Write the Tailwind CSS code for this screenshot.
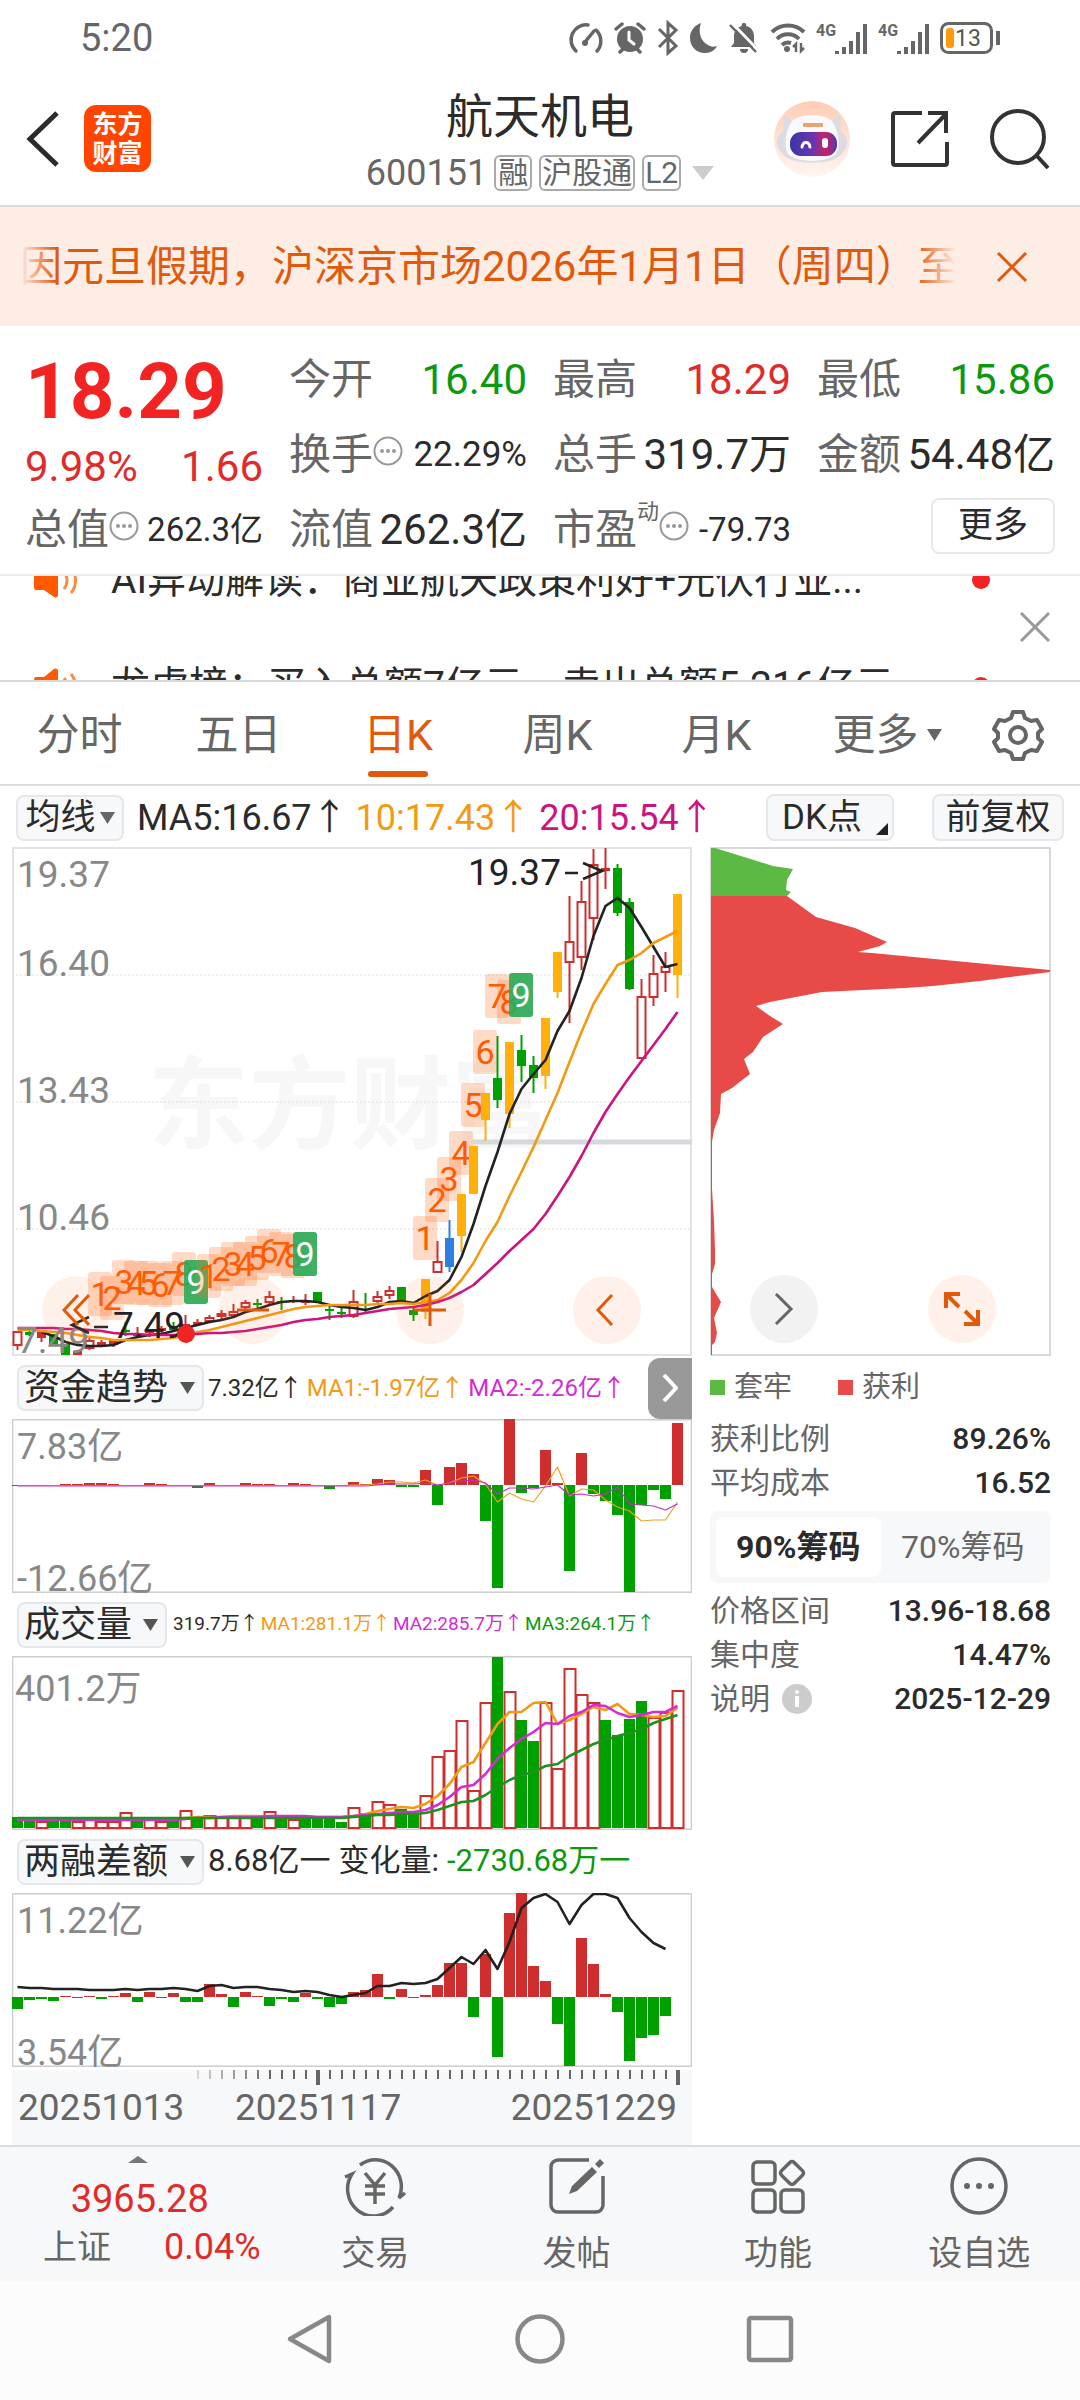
<!DOCTYPE html>
<html lang="zh-CN">
<head>
<meta charset="utf-8">
<meta name="viewport" content="width=device-width, initial-scale=1">
<title>航天机电 600151</title>
<script src="https://cdn.jsdelivr.net/npm/@tailwindcss/browser@4"></script>
</head>
<body class="min-h-screen flex flex-col bg-white text-[#2b2b2b] font-['Roboto','Noto_Sans_CJK_SC',sans-serif] overflow-x-hidden">

<!-- status bar -->
<div class="h-18 flex items-center justify-between pl-20 pr-20 pt-1 text-[#666]">
  <span class="text-[38px] leading-10">5:20</span>
  <div class="flex items-center gap-[10px]">
    <svg class="w-9 h-8" viewBox="0 0 36 32" fill="none" stroke="#666" stroke-width="3.5" stroke-linecap="round"><path d="M8 29A15 15 0 0 1 20 3M28 8A15 15 0 0 1 29 29M17 20 26 9"/><circle cx="17" cy="21" r="3" fill="#666" stroke="none"/></svg>
    <svg class="w-8 h-8" viewBox="0 0 32 32" fill="none" stroke="#666" stroke-width="3.5" stroke-linecap="round"><circle cx="16" cy="17" r="13" fill="#666" stroke="none"/><path d="M2 7 8 2M30 7 24 2M6 30l3-3M26 30l-3-3"/><path d="M15 10v8l5 4" stroke="#fff" stroke-width="3"/></svg>
    <svg class="w-6 h-9" viewBox="0 0 24 36" fill="none" stroke="#666" stroke-width="3"><path d="M3 9 20 26 12 33V3l8 7L3 27"/></svg>
    <svg class="w-7 h-8" viewBox="0 0 28 32"><path d="M11 1C3 4 0 10 0 16c0 9 7 15 15 15 6 0 10-3 12-7-3 1-6 1-9-1C10 19 8 9 11 1Z" fill="#666"/></svg>
    <svg class="w-8 h-8" viewBox="0 0 32 32"><path d="M16 1a2 2 0 0 1 2 3c5 1 8 5 8 10v7l3 4H3l3-4v-7c0-5 3-9 8-10a2 2 0 0 1 2-3ZM12 27h8a4 4 0 0 1-8 0Z" fill="#666"/><path d="M5 2 31 29" stroke="#fff" stroke-width="3"/><path d="M2 3 28 30" stroke="#666" stroke-width="2.5"/></svg>
    <svg class="w-9 h-8" viewBox="0 0 36 32" fill="none" stroke="#666" stroke-width="4"><path d="M2 10a23 23 0 0 1 32 0M7 17a15 15 0 0 1 22 0M12 23a9 9 0 0 1 9-2"/><circle cx="17" cy="27" r="3" fill="#666" stroke="none"/><path d="M26 30v-8l-3 3M31 21v8l3-3" stroke-width="2.5"/></svg>
    <svg class="w-13 h-9" viewBox="0 0 52 36"><text x="0" y="16" font-size="16" font-weight="700" fill="#666">4G</text><path d="M21 31v3M28 27v7M35 21v13M42 12v22M49 4v30" stroke="#666" stroke-width="4"/></svg>
    <svg class="w-13 h-9" viewBox="0 0 52 36"><text x="0" y="16" font-size="16" font-weight="700" fill="#666">4G</text><path d="M21 31v3M28 27v7M35 21v13M42 12v22M49 4v30" stroke="#666" stroke-width="4"/></svg>
    <svg class="w-15 h-8" viewBox="0 0 60 32"><rect x="1.5" y="1.500" width="50" height="29" rx="7" fill="none" stroke="#666" stroke-width="3"/><rect x="6" y="6" width="8" height="20" rx="3" fill="#ff9a0a"/><path d="M58 9v14" stroke="#666" stroke-width="4"/><text x="15" y="24" font-size="23" fill="#555">13</text></svg>
  </div>
</div>

<!-- title bar -->
<header class="h-[135px] grid grid-cols-[1fr_auto_1fr] items-center border-b-2 border-[#dcdcdc]">
  <div class="flex items-center gap-6 pl-6">
    <button aria-label="返回"><svg class="w-9 h-14" viewBox="0 0 36 56" fill="none" stroke="#2b2b2b" stroke-width="5"><path d="M33 2 6 28l27 26"/></svg></button>
    <div class="w-[67px] h-[67px] rounded-xl bg-[#ff4500] text-white font-bold text-[25px] leading-[29px] flex flex-col items-center justify-center"><span>东方</span><span>财富</span></div>
  </div>
  <div class="flex flex-col items-center gap-2">
    <h1 class="text-[47px] leading-[60px]">航天机电</h1>
    <div class="flex items-center gap-[7px] text-[#666]">
      <span class="text-[36px] leading-9">600151</span>
      <span class="h-9 px-[2px] border-2 border-[#aaa] rounded-md text-[30px] leading-8">融</span>
      <span class="h-9 px-[1px] border-2 border-[#aaa] rounded-md text-[30px] leading-8">沪股通</span>
      <span class="h-9 px-[1px] border-2 border-[#aaa] rounded-md text-[30px] leading-8">L2</span>
      <svg class="w-[22px] h-[14px] ml-1" viewBox="0 0 22 14"><path d="M0 0h22L11 14Z" fill="#ccc"/></svg>
    </div>
  </div>
  <div class="flex items-center justify-end gap-[41px] pr-[30px]">
    <button aria-label="助手"><svg class="w-[76px] h-[76px]" viewBox="0 0 76 76">
      <defs><linearGradient id="halo" x1="0" y1="0" x2="0" y2="1"><stop offset="0" stop-color="#ffcdb5"/><stop offset="1" stop-color="#fff6f1"/></linearGradient>
      <linearGradient id="visor" x1="0" y1="0" x2="1" y2="0"><stop offset="0" stop-color="#3b35a8"/><stop offset=".5" stop-color="#6a35b0"/><stop offset=".75" stop-color="#d01e62"/><stop offset="1" stop-color="#4a3bb5"/></linearGradient></defs>
      <circle cx="38" cy="38" r="38" fill="url(#halo)"/>
      <path d="M10 17c2-3 6-2 8 3 10-8 30-8 40 0 2-5 6-6 8-3l1 14c8 5 8 15 1 21-6 13-54 13-60 0-7-6-7-16 1-21Z" fill="#dcdbe2"/>
      <path d="M18 20c10-8 30-8 40 0 6 9 9 24 4 33-8 9-40 9-48 0-5-9-2-24 4-33Z" fill="#fafafc"/>
      <rect x="29" y="22" width="20" height="4" rx="1" fill="#e8a36f"/>
      <rect x="16" y="31" width="47" height="24" rx="11" fill="url(#visor)"/>
      <path d="M28 46c1-6 7-6 8 0" stroke="#fff" stroke-width="3" fill="none" stroke-linecap="round"/><rect x="48" y="37" width="6" height="10" rx="3" fill="#fff"/>
    </svg></button>
    <button aria-label="分享"><svg class="w-[58px] h-[58px]" viewBox="0 0 58 58" fill="none" stroke="#333" stroke-width="4"><path d="M31 3H4a2 2 0 0 0-2 2v48a2 2 0 0 0 2 2h50a2 2 0 0 0 2-2V32M37 3h18v20M55 4 27 33"/></svg></button>
    <button aria-label="搜索"><svg class="w-[60px] h-[60px]" viewBox="0 0 60 60" fill="none" stroke="#333" stroke-width="4"><circle cx="28" cy="28" r="26"/><path d="m47 47 11 12"/></svg></button>
  </div>
</header>

<!-- notice -->
<section class="h-[119px] bg-[#fdede4] flex items-center justify-between pl-5 pr-[52px] text-[#e15a0b]">
  <div class="relative flex-1 overflow-hidden whitespace-nowrap text-[42px] leading-[60px] mr-[40px]">因元旦假期，沪深京市场2026年1月1日（周四）至1月3日休市
    <div class="absolute inset-y-0 left-0 w-9 bg-linear-to-r from-[#fdede4] to-[#fdede4]/0"></div>
    <div class="absolute inset-y-0 right-0 w-10 bg-linear-to-l from-[#fdede4] to-[#fdede4]/0"></div>
  </div>
  <button aria-label="关闭公告"><svg class="w-8 h-8" viewBox="0 0 32 32" stroke="#e15a0b" stroke-width="3"><path d="m2 2 28 28M30 2 2 30"/></svg></button>
</section>

<!-- quote -->
<section class="h-[250px] grid grid-cols-4 grid-rows-[75px_75px_75px] gap-x-[26px] px-[25px] pt-4 text-[42px] leading-[60px] whitespace-nowrap border-b-2 border-[#ececec]">
  <div class="row-span-2 flex flex-col text-[#e02b2b]">
    <div class="h-[100px] flex items-center text-[78px] font-bold text-[#f22323]">18.29</div>
    <div class="flex justify-between leading-[50px]"><span>9.98%</span><span>1.66</span></div>
  </div>
  <div class="flex items-center justify-between"><span class="text-[#666]">今开</span><span class="text-[#0d990d]">16.40</span></div>
  <div class="flex items-center justify-between"><span class="text-[#666]">最高</span><span class="text-[#e02b2b]">18.29</span></div>
  <div class="flex items-center justify-between"><span class="text-[#666]">最低</span><span class="text-[#0d990d]">15.86</span></div>
  <div class="flex items-center justify-between"><span class="flex items-center text-[#666]">换手<svg class="w-[30px] h-[30px] -mt-2" viewBox="0 0 30 30"><circle cx="15" cy="15" r="13.500" fill="none" stroke="#999" stroke-width="2"/><g fill="#999"><circle cx="9" cy="15" r="2"/><circle cx="15" cy="15" r="2"/><circle cx="21" cy="15" r="2"/></g></svg></span><span class="text-[35px]">22.29%</span></div>
  <div class="flex items-center justify-between"><span class="text-[#666]">总手</span><span>319.7万</span></div>
  <div class="flex items-center justify-between"><span class="text-[#666]">金额</span><span>54.48亿</span></div>
  <div class="flex items-center justify-between"><span class="flex items-center text-[#666]">总值<svg class="w-[30px] h-[30px] -mt-2" viewBox="0 0 30 30"><circle cx="15" cy="15" r="13.500" fill="none" stroke="#999" stroke-width="2"/><g fill="#999"><circle cx="9" cy="15" r="2"/><circle cx="15" cy="15" r="2"/><circle cx="21" cy="15" r="2"/></g></svg></span><span class="text-[33px]">262.3亿</span></div>
  <div class="flex items-center justify-between"><span class="text-[#666]">流值</span><span>262.3亿</span></div>
  <div class="flex items-center justify-between"><span class="flex items-center text-[#666]">市盈<span class="text-[22px] leading-6 self-start">动</span><svg class="w-[30px] h-[30px] -mt-2" viewBox="0 0 30 30"><circle cx="15" cy="15" r="13.500" fill="none" stroke="#999" stroke-width="2"/><g fill="#999"><circle cx="9" cy="15" r="2"/><circle cx="15" cy="15" r="2"/><circle cx="21" cy="15" r="2"/></g></svg></span><span class="text-[33px]">-79.73</span></div>
  <div class="flex items-center justify-end"><button class="w-[124px] h-[56px] border-2 border-[#e8e8e8] rounded-lg text-[35px] leading-[52px] -mt-2">更多</button></div>
</section>

<!-- news ticker -->
<section class="relative h-[106px] overflow-hidden border-b-2 border-[#d8d8d8] text-[39px] leading-[60px]">
  <ul class="-mt-[49px]">
    <li class="h-[106px] flex items-center pl-[34px] pr-[90px]">
      <svg class="w-11 h-9 mr-[33px]" viewBox="0 0 44 36"><path d="M2 9h8L20 1c2-1 4 0 4 2v30c0 2-2 3-4 2L10 28H2c-1 0-2-1-2-3V12c0-2 1-3 2-3Z" fill="#ff5a00"/><path d="M30 10c4 5 4 12 0 17M37 6c6 7 6 18 0 25" fill="none" stroke="#ff8a40" stroke-width="3"/></svg>
      <a href="#" class="flex-1 whitespace-nowrap">AI异动解读：商业航天政策利好+光伏行业...</a><i class="w-[18px] h-[18px] rounded-full bg-[#f22323]"></i></li>
    <li class="h-[106px] flex items-center pl-[34px] pr-[90px]">
      <svg class="w-11 h-9 mr-[33px]" viewBox="0 0 44 36"><path d="M2 9h8L20 1c2-1 4 0 4 2v30c0 2-2 3-4 2L10 28H2c-1 0-2-1-2-3V12c0-2 1-3 2-3Z" fill="#ff5a00"/><path d="M30 10c4 5 4 12 0 17M37 6c6 7 6 18 0 25" fill="none" stroke="#ff8a40" stroke-width="3"/></svg>
      <a href="#" class="flex-1 whitespace-nowrap">龙虎榜：买入总额7亿元，卖出总额5.216亿元</a><i class="w-[18px] h-[18px] rounded-full bg-[#f22323]"></i></li>
  </ul>
  <button aria-label="关闭资讯" class="absolute right-[30px] top-[36px]"><svg class="w-[30px] h-[30px]" viewBox="0 0 30 30" stroke="#999" stroke-width="3"><path d="m1 1 28 28M29 1 1 29"/></svg></button>
</section>

<!-- period tabs -->
<nav class="h-[104px] pt-1 grid grid-cols-[159fr_159fr_160fr_159fr_159fr_182fr_102fr] items-center border-b-2 border-[#dcdcdc] text-[43px] leading-[60px] text-[#666]">
  <button>分时</button><button>五日</button>
  <button class="relative text-[#e15a0b]">日K<span class="absolute left-1/2 -translate-x-1/2 -bottom-3 w-[60px] h-[6px] rounded-full bg-[#e15a0b]"></span></button>
  <button>周K</button><button>月K</button>
  <button class="flex items-center justify-center gap-2">更多<svg class="w-[15px] h-3" viewBox="0 0 15 12"><path d="M0 0h15L7.500 12Z" fill="#666"/></svg></button>
  <button aria-label="设置" class="pl-[14px]"><svg class="w-[52px] h-[52px]" viewBox="0 0 52 52" fill="none" stroke="#666" stroke-width="4" stroke-linejoin="round"><path d="M21 3h10l2 6 6 3 6-1 5 9-4 4v5l4 4-5 9-6-1-6 3-2 6H21l-2-6-6-3-6 1-5-9 4-4v-5l-4-4 5-9 6 1 6-3Z"/><circle cx="26" cy="26" r="8"/></svg></button>
</nav>

<!-- moving averages -->
<div class="h-[61px] flex items-center pl-4 pr-4 pt-[2px] text-[36px] leading-[44px] whitespace-nowrap">
  <button class="h-[46px] w-[108px] shrink-0 flex items-center justify-center gap-1 bg-[#f7f8fa] border-2 border-[#e5e7eb] rounded-lg text-[35px] leading-[42px]">均线<svg class="w-[15px] h-3" viewBox="0 0 15 12"><path d="M0 0h15L7.500 12Z" fill="#666"/></svg></button>
  <div class="flex gap-2 ml-[13px]"><span>MA5:16.67↑</span><span class="text-[#f39a12]">10:17.43↑</span><span class="text-[#cc1480]">20:15.54↑</span></div>
  <div class="flex gap-[38px] ml-auto text-[35px] leading-[42px]">
    <button class="relative h-[47px] w-[128px] pr-4 bg-[#f7f8fa] border-2 border-[#e5e7eb] rounded-lg">DK点<svg class="absolute right-1 bottom-1 w-3 h-3" viewBox="0 0 12 12"><path d="M12 0v12H0Z" fill="#222"/></svg></button>
    <button class="h-[47px] w-[132px] bg-[#f7f8fa] border-2 border-[#e5e7eb] rounded-lg">前复权</button>
  </div>
</div>

<main class="grid grid-cols-[minmax(0,692fr)_minmax(0,388fr)] items-start">
  <div class="pl-3 whitespace-nowrap">
    <div class="relative">
      <svg id="kline" class="block w-full h-auto" viewBox="12 848 680 510"></svg>
      <div class="absolute inset-x-0 bottom-[13px] flex justify-between pl-[30px] pr-[51px]">
        <button aria-label="最左" class="w-[68px] h-[68px] rounded-full bg-[#ff6a20]/10 flex items-center justify-center"><svg class="w-7 h-8" viewBox="0 0 28 32" fill="none" stroke="#e15a0b" stroke-width="3"><path d="M16 1 2 16l14 15M27 1 13 16l14 15"/></svg></button>
        <button aria-label="缩小" class="w-[68px] h-[68px] rounded-full bg-[#ff6a20]/10 flex items-center justify-center"><svg class="w-8 h-8" viewBox="0 0 32 32" stroke="#e15a0b" stroke-width="3"><path d="M0 16h32"/></svg></button>
        <button aria-label="放大" class="w-[68px] h-[68px] rounded-full bg-[#ff6a20]/10 flex items-center justify-center"><svg class="w-8 h-8" viewBox="0 0 32 32" stroke="#e15a0b" stroke-width="3"><path d="M0 16h32M16 0v32"/></svg></button>
        <button aria-label="左移" class="w-[68px] h-[68px] rounded-full bg-[#ff6a20]/10 flex items-center justify-center"><svg class="w-7 h-8" viewBox="0 0 28 32" fill="none" stroke="#e15a0b" stroke-width="3"><path d="M19 1 5 16l14 15"/></svg></button>
      </div>
    </div>

    <div class="h-[62px] flex items-center pl-[5px]">
      <button class="h-[46px] w-[187px] shrink-0 flex items-center justify-between pl-[5px] pr-[7px] bg-[#f7f8fa] border-2 border-[#e5e7eb] rounded-lg text-[36px] leading-[42px]">资金趋势<svg class="w-[15px] h-3" viewBox="0 0 15 12"><path d="M0 0h15L7.500 12Z" fill="#555"/></svg></button>
      <div class="flex gap-1 ml-1 text-[24px]"><span>7.32亿↑</span><span class="text-[#f39a12]">MA1:-1.97亿↑</span><span class="text-[#d42bd4]">MA2:-2.26亿↑</span></div>
      <button aria-label="下一指标" class="ml-auto w-[44px] h-[61px] shrink-0 rounded-l-xl bg-[#999] flex items-center justify-center"><svg class="w-4 h-7" viewBox="0 0 16 28" fill="none" stroke="#fff" stroke-width="4"><path d="m2 1 12 13L2 27"/></svg></button>
    </div>
    <svg id="flow" class="block w-full h-auto" viewBox="12 1420 680 174"></svg>

    <div class="h-[63px] flex items-center pl-[5px]">
      <button class="h-[46px] w-[150px] shrink-0 flex items-center justify-between pl-[5px] pr-[7px] bg-[#f7f8fa] border-2 border-[#e5e7eb] rounded-lg text-[36px] leading-[42px]">成交量<svg class="w-[15px] h-3" viewBox="0 0 15 12"><path d="M0 0h15L7.500 12Z" fill="#555"/></svg></button>
      <div class="flex gap-[2px] ml-[6px] text-[19px]"><span>319.7万↑</span><span class="text-[#f39a12]">MA1:281.1万↑</span><span class="text-[#d42bd4]">MA2:285.7万↑</span><span class="text-[#0d990d]">MA3:264.1万↑</span></div>
    </div>
    <svg id="volume" class="block w-full h-auto" viewBox="12 1657 680 174"></svg>

    <div class="h-[63px] flex items-center pl-[5px]">
      <button class="h-[46px] w-[187px] shrink-0 flex items-center justify-between pl-[5px] pr-[7px] bg-[#f7f8fa] border-2 border-[#e5e7eb] rounded-lg text-[36px] leading-[42px]">两融差额<svg class="w-[15px] h-3" viewBox="0 0 15 12"><path d="M0 0h15L7.500 12Z" fill="#555"/></svg></button>
      <div class="flex gap-2 ml-1 text-[31px]"><span>8.68亿一</span><span>变化量:</span><span class="text-[#0d990d]">-2730.68万一</span></div>
    </div>
    <svg id="margin" class="block w-full h-auto" viewBox="12 1894 680 174"></svg>
    <svg id="axis" class="block w-full h-auto" viewBox="12 2068 680 78"></svg>
  </div>

  <aside class="pl-[18px] pr-[29px] text-[30px] leading-[44px] text-[#666]">
    <div class="relative">
      <svg class="block w-full h-auto" viewBox="710 848 341 510">
        <rect x="711" y="849" width="339" height="507" fill="none" stroke="#ccc" stroke-width="1.500"/>
        <path d="M711 849H715L757 862 773 867 793 870 787 881 786 891 791 893 787 897H711Z" fill="#5cb944"/>
        <path d="M711 897H787L816 918 855 929 887 943 880 947 858 953 872 954 1050 971V973L980 982 933 987 905 989 822 993 770 1003 756 1007 770 1017 783 1025 763 1038 753 1053 744 1060 750 1075 732 1089 721 1095 720 1114 714 1131 712 1143V1190L714 1222 715 1250V1265L712 1275V1288L721 1303 714 1319 717 1334 715 1343 712 1346V1356H711Z" fill="#e84a48"/>
      </svg>
      <div class="absolute inset-x-0 bottom-[14px] flex justify-between pl-10 pr-[55px]">
        <button aria-label="收起" class="w-[68px] h-[68px] rounded-full bg-[#f2f2f2] flex items-center justify-center"><svg class="w-5 h-8" viewBox="0 0 20 32" fill="none" stroke="#666" stroke-width="3"><path d="m2 1 15 15L2 31"/></svg></button>
        <button aria-label="全屏" class="w-[68px] h-[68px] rounded-full bg-[#fff1e9] flex items-center justify-center"><svg class="w-9 h-9" viewBox="0 0 36 36" fill="none" stroke="#e15a0b" stroke-width="4"><path d="M2 17V3h14M3 4l12 12M34 19v14H20M33 32 21 20"/></svg></button>
      </div>
    </div>
    <div class="h-[60px] flex items-center text-[29px]">
      <i class="w-[15px] h-[15px] bg-[#5cb944] mr-[9px]"></i>套牢<i class="w-[15px] h-[15px] bg-[#e84a48] ml-[46px] mr-[9px]"></i>获利
    </div>
    <dl>
      <div class="flex justify-between"><dt>获利比例</dt><dd class="font-medium text-[#2b2b2b]">89.26%</dd></div>
      <div class="flex justify-between"><dt>平均成本</dt><dd class="font-medium text-[#2b2b2b]">16.52</dd></div>
    </dl>
    <div class="h-[72px] my-[6px] grid grid-cols-2 p-[6px] bg-[#f7f8fa] rounded-lg text-[32px] leading-[60px]">
      <button class="bg-white rounded-lg font-bold text-[#2b2b2b]">90%筹码</button><button>70%筹码</button>
    </div>
    <dl>
      <div class="flex justify-between"><dt>价格区间</dt><dd class="font-medium text-[#2b2b2b]">13.96-18.68</dd></div>
      <div class="flex justify-between"><dt>集中度</dt><dd class="font-medium text-[#2b2b2b]">14.47%</dd></div>
      <div class="flex justify-between"><dt class="flex items-center gap-3">说明<svg class="w-[30px] h-[30px]" viewBox="0 0 30 30"><circle cx="15" cy="15" r="15" fill="#ccc"/><circle cx="15" cy="8" r="2" fill="#fff"/><path d="M15 12v11" stroke="#fff" stroke-width="4"/></svg></dt><dd class="font-medium text-[#2b2b2b]">2025-12-29</dd></div>
    </dl>
  </aside>
</main>

<!-- bottom bar -->
<footer class="h-[136px] grid grid-cols-[274fr_201fr_201fr_201fr_201fr] bg-[#f7f8fa] border-t-2 border-[#dadcde] text-[34px] leading-10 text-[#666]">
  <a href="#" class="relative flex flex-col items-center pt-[30px] pl-[5px] text-[#e02b2b]">
    <svg class="absolute left-[128px] top-[9px] w-5 h-[7px]" viewBox="0 0 20 7"><path d="M0 7 10 0l10 7Z" fill="#777"/></svg>
    <span class="text-[38px] leading-[44px]">3965.28</span>
    <span class="flex gap-[53px] pl-6 leading-[52px]"><span class="text-[#666]">上证</span><span class="text-[36px]">0.04%</span></span>
  </a>
  <button class="flex flex-col items-center pt-[9px] gap-[17px]"><svg class="w-16 h-[60px]" viewBox="0 0 64 60" fill="none" stroke="#666" stroke-width="3.500"><path d="M17 9A26 27 0 0 1 56 42l6-5M50 51A26 27 0 0 1 9 18L2 21M22 17l10 12 10-12M32 29v19M22 30h20M22 38h20"/></svg>交易</button>
  <button class="flex flex-col items-center pt-[9px] gap-[17px]"><svg class="w-[60px] h-[60px]" viewBox="0 0 60 60" fill="none" stroke="#666" stroke-width="3.500"><path d="M42 4H11a7 7 0 0 0-7 7v38a7 7 0 0 0 7 7h38a7 7 0 0 0 7-7V20"/><path d="m22 38 3-8 20-19 5 5-20 19ZM48 8l5-5 4 4-5 5Z" fill="#666" stroke="none"/></svg>发帖</button>
  <button class="flex flex-col items-center pt-[9px] gap-[17px]"><svg class="w-[60px] h-[60px]" viewBox="0 0 60 60" fill="none" stroke="#666" stroke-width="3.500"><rect x="5" y="6" width="22" height="22" rx="4"/><rect x="5" y="34" width="22" height="22" rx="4"/><rect x="33" y="34" width="22" height="22" rx="4"/><rect x="35" y="8" width="18" height="18" rx="3" transform="rotate(45 44 17)"/></svg>功能</button>
  <button class="flex flex-col items-center pt-[9px] gap-[17px]"><svg class="w-[60px] h-[60px]" viewBox="0 0 60 60" fill="none" stroke="#666" stroke-width="3.500"><circle cx="30" cy="30" r="27"/><g fill="#666" stroke="none"><circle cx="18" cy="30" r="3"/><circle cx="30" cy="30" r="3"/><circle cx="42" cy="30" r="3"/></g></svg>设自选</button>
</footer>

<!-- system navigation -->
<div class="flex-1 min-h-[118px] bg-[#fcfcfc] flex items-start justify-center gap-[180px] pt-[32px]">
  <button aria-label="后退"><svg class="w-[50px] h-[52px]" viewBox="0 0 50 52" fill="none" stroke="#888" stroke-width="4.500" stroke-linejoin="round"><path d="M44 4v44L5 26Z"/></svg></button>
  <button aria-label="主屏"><svg class="w-[50px] h-[52px]" viewBox="0 0 50 52" fill="none" stroke="#888" stroke-width="4.500"><circle cx="25" cy="26" r="22.500"/></svg></button>
  <button aria-label="多任务"><svg class="w-[50px] h-[52px]" viewBox="0 0 50 52" fill="none" stroke="#888" stroke-width="4.500"><rect x="4" y="5" width="42" height="42" rx="2"/></svg></button>
</div>

<script>
const RED = '#cf2e2e', GREEN = '#00a000', YELLOW = '#ffb00a', BLUE = '#2f7fe0';
const COLORS = { g: GREEN, y: YELLOW, b: BLUE, r: RED };
const X = i => 17.5 + 12 * i;
const line = (ys, color, w, start = 0) =>
  `<polyline fill="none" stroke="${color}" stroke-width="${w}" stroke-linejoin="round" points="${ys.map((y, k) => X(k + start) + ',' + y).join(' ')}"/>`;
const label = (x, y, t, size = 37, color = '#888', anchor = 'start') =>
  `<text x="${x}" y="${y}" font-size="${size}" fill="${color}" text-anchor="${anchor}">${t}</text>`;
const frame = (y, h) => `<rect x="12.5" y="${y}" width="679" height="${h}" fill="none" stroke="#ccc" stroke-width="1.5"/>`;
const draw = (id, s) => document.getElementById(id).innerHTML = s;

// candles: type, high, body top, body bottom, low
const candles = [
 ['r',1332,1332,1347,1351],['g',1331,1333,1336,1337],['f',1333,1333,1339,1343],['g',1335,1335,1345,1347],['g',1345,1345,1356,1356],
 ['f',1351,1352,1356,1356],['r',1338,1341,1350,1351],['f',1341,1343,1346,1346],['f',1340,1341,1346,1348],['g',1323,1331,1333,1337],
 ['f',1328,1335,1337,1339],['f',1330,1332,1334,1338],['f',1327,1329,1332,1335],['g',1323,1328,1331,1333],['f',1316,1325,1329,1333],
 ['f',1320,1323,1326,1327],['r',1316,1318,1323,1324],['r',1311,1314,1318,1320],['r',1305,1312,1317,1318],['r',1301,1303,1309,1310],
 ['g',1300,1304,1306,1310],['r',1292,1297,1304,1306],['g',1298,1302,1304,1311],['f',1297,1301,1302,1304],['f',1295,1302,1304,1306],
 ['g',1293,1293,1303,1304],['g',1307,1310,1312,1321],['g',1308,1313,1315,1319],['r',1291,1302,1318,1319],['g',1294,1305,1307,1313],
 ['r',1292,1297,1303,1305],['r',1287,1291,1297,1300],['g',1288,1288,1302,1302],['g',1308,1311,1316,1322],['y',1280,1280,1313,1320],
 ['r',1242,1262,1274,1274],['b',1221,1239,1268,1273],['y',1195,1195,1237,1253],['y',1147,1147,1195,1195],['y',1094,1094,1121,1142],
 ['g',1037,1079,1101,1109],['y',1043,1043,1115,1129],['g',1036,1051,1067,1083],['g',1057,1066,1079,1094],['y',1019,1019,1077,1090],
 ['y',953,953,993,999],['r',897,942,964,1024],['r',882,902,959,971],['r',850,865,920,941],['f',849,869,872,890],
 ['g',865,869,914,917],['g',899,903,990,991],['r',980,997,1060,1060],['r',956,974,999,1007],['r',953,967,974,993],['y',895,895,976,999]];
const candle = ([t, h, a, b, l], i) => {
  const x = X(i);
  if (t === 'r') return `<path d="M${x} ${h}V${a}M${x} ${b}V${l}" stroke="${RED}" stroke-width="2"/><rect x="${x - 4}" y="${a + 1}" width="8" height="${Math.max(b - a - 2, 1)}" fill="none" stroke="${RED}" stroke-width="2"/>`;
  const c = t === 'f' ? RED : COLORS[t];
  return `<path d="M${x} ${h}V${l}" stroke="${c}" stroke-width="2"/><rect x="${x - 4.5}" y="${a}" width="9" height="${b - a}" fill="${c}"/>`;
};
const ma5 = [1333,1337,1343,1346,1347,1347,1346,1341,1338,1336,1335,1332,1329,1326,1323,1321,1318,1313,1310,1306,1303,1302,1302,1303,1306,1308,1309,1311,1308,1303,1302,1304,1297,1292,1281,1258,1225,1187,1153,1115,1090,1075,1061,1032,1012,979,937,907,899,909,928,948,968,965];
const ma10 = [1331,1331,1332,1333,1334,1336,1338,1339,1341,1341,1341,1341,1340,1339,1337,1333,1331,1328,1325,1322,1319,1316,1313,1310,1308,1307,1306,1306,1306,1306,1305,1305,1304,1305,1303,1301,1294,1281,1264,1242,1223,1197,1173,1148,1121,1094,1063,1033,1005,985,966,961,954,944,938,932];
const ma20 = [1329,1329,1329,1329,1330,1330,1331,1332,1334,1335,1335,1336,1336,1336,1335,1335,1334,1334,1333,1332,1330,1328,1326,1323,1321,1320,1318,1317,1316,1314,1312,1310,1309,1308,1306,1303,1299,1293,1286,1275,1264,1252,1241,1230,1215,1197,1178,1157,1134,1113,1095,1078,1062,1046,1030,1013];
// nine-turn counters: first x, tops of counters 1..9
const runs = [[88,[1273,1277,1261,1262,1262,1264,1262,1253,1261]],[197,[1255,1248,1243,1243,1237,1230,1233,1235,1233]],[413,[1217,1179,1158,1132,1084,1031,975,981,974]]];
const badges = runs.map(([x0, tops]) => tops.map((y, k) => {
  const x = x0 + 12 * k, last = k === 8;
  return `<rect x="${x}" y="${y}" width="24" height="44" rx="3" fill="${last ? '#2faa58' : '#ff6a20'}" fill-opacity="${last ? .93 : .25}"/>` + label(x + 12, y + 34, k + 1, 34, last ? '#fff' : '#ff5a00', 'middle');
}).join('')).join('');
draw('kline',
  `<rect x="13" y="849" width="678" height="507" fill="none" stroke="#e3e3e3" stroke-width="2"/>` +
  `<text x="148" y="1142" font-size="101" font-weight="700" fill="#f7f7f7">东方财富</text>` +
  `<path d="M12 976H692M12 1103H692M12 1230H692" stroke="#ddd" stroke-width="1" stroke-dasharray="2 2"/>` +
  `<path d="M473 1143H692" stroke="#d5d9de" stroke-width="5"/>` + badges + candles.map(candle).join('') +
  line(ma5, '#222', 2.6, 2) + line(ma10, '#f39a12', 2.6) + line(ma20, '#cc1480', 2.6) +
  label(17, 888, '19.37') + label(17, 977, '16.40') + label(17, 1104, '13.43') + label(17, 1231, '10.46') + label(17, 1354, '7.49') +
  label(468, 886, '19.37', 37, '#222') + `<path d="M565 874H578M583 864 602 872 583 880M89 1318 72 1326 89 1334M94 1328H108" fill="none" stroke="#222" stroke-width="2.6"/>` +
  label(113, 1339, '7.49', 37, '#222') + `<circle cx="186" cy="1335" r="9" fill="#f22323"/>`);

// columns drawn from a zero line; y above it is red, below it green
const columns = (ys, zero) => ys.map((y, i) => `<rect x="${X(i) - 5.5}" y="${Math.min(y, zero)}" width="11" height="${Math.abs(y - zero)}" fill="${y < zero ? RED : GREEN}"/>`).join('');
draw('flow', frame(1420.8, 172.4) +
  columns([1487,1487,1487,1486,1485,1485,1484,1484,1485,1487,1487,1484,1485,1487,1487,1489,1484,1487,1487,1484,1485,1485,1487,1484,1485,1487,1490,1487,1483,1485,1480,1481,1488,1488,1471,1506,1468,1464,1475,1522,1589,1420,1494,1489,1451,1484,1572,1454,1495,1502,1516,1593,1506,1491,1500,1424], 1486) +
  line([...Array(28).fill(1486.5),1486,1486,1485,1483,1483,1484,1481,1486,1484,1479,1477,1485,1503,1494,1500,1503,1487,1468,1497,1490,1491,1501,1508,1512,1522,1521,1521,1503], '#f0a020', 1.2) +
  line([...Array(28).fill(1487),1487,1487,1486,1485,1485,1485,1484,1486,1484,1482,1481,1484,1495,1489,1489,1490,1488,1486,1496,1495,1497,1495,1488,1505,1506,1507,1511,1505], '#c030c0', 1.2) +
  label(17, 1460, '7.83亿', 36) + label(17, 1592, '-12.66亿', 36));

const vol = [1818,1818,1822,1818,1818,1822,1818,1822,1822,1813,1820,1818,1822,1820,1811,1818,1816,1817,1817,1817,1817,1812,1817,1820,1817,1817,1817,1823,1808,1814,1802,1805,1810,1815,1796,1757,1751,1721,1791,1703,1658,1692,1721,1742,1703,1769,1669,1695,1703,1721,1736,1720,1702,1718,1713,1691];
const volKind = 'ggrggrrrrrgrrgrgrrrrgrgrggggrgrrggrrrrrrgrggrrrrrggggrrr';
draw('volume', frame(1657.8, 172.4) + vol.map((y, i) => volKind[i] === 'g'
    ? `<rect x="${X(i) - 5.5}" y="${y}" width="11" height="${1829 - y}" fill="${GREEN}"/>`
    : `<rect x="${X(i) - 5}" y="${y + 1}" width="11" height="${1828 - y}" fill="#fff" stroke="${RED}" stroke-width="2"/>`).join('') +
  line([...Array(14).fill(1820),1819,1818,1818,1818,1817,1817,1817,1818,1818,1818,1818,1818,1818,1818,1817,1815,1812,1810,1808,1809,1805,1797,1785,1768,1763,1744,1725,1713,1713,1704,1703,1725,1721,1715,1708,1711,1705,1715,1716,1718,1717,1709], '#f39a12', 2.6) +
  line([...Array(14).fill(1821),1820,1819,1819,1818,1818,1818,1818,1817,1817,1817,1817,1818,1818,1818,1817,1816,1815,1814,1813,1813,1811,1806,1798,1788,1786,1775,1760,1749,1740,1733,1724,1725,1717,1713,1706,1707,1714,1718,1716,1713,1713,1707], '#d42bd4', 2.6) +
  line([...Array(28).fill(1819),1818,1817,1816,1816,1815,1815,1814,1811,1807,1803,1802,1796,1788,1781,1776,1773,1767,1765,1757,1751,1745,1741,1737,1734,1730,1724,1720,1716], '#1d931d', 2.6) +
  label(15, 1702, '401.2万', 36));

draw('margin', frame(1894.8, 172.4) +
  columns([2010,2001,2000,2002,1997,1999,1997,2000,1997,1994,2003,1993,1999,1994,2003,2003,1985,1995,2008,1993,1997,2007,2000,2003,1994,2000,2008,2005,1993,1991,1975,2000,1990,1999,1996,1986,1964,1964,2018,1955,2058,1914,1894,1967,1982,2025,2067,1939,1965,1995,2013,2062,2039,2036,2017], 1998) +
  line([1988,1989,1989,1990,1990,1990,1991,1991,1991,1990,1991,1990,1990,1989,1990,1992,1987,1986,1989,1988,1988,1990,1991,1993,1992,1993,1996,1998,1996,1994,1987,1987,1984,1985,1984,1980,1969,1958,1965,1951,1970,1943,1909,1899,1895,1903,1925,1906,1895,1895,1899,1919,1933,1944,1950], '#222', 2.6) +
  label(17, 1934, '11.22亿', 36) + label(17, 2066, '3.54亿', 36));

let ticks = '';
for (let i = 15; i < 56; i++) {
  const major = i === 25 || i === 55;
  ticks += `<path d="M${X(i) + .5} 2071V${major ? 2086 : 2080}" stroke="#666" stroke-opacity="${Math.min(1, (i - 13) / 8)}" stroke-width="${major ? 4 : 2}"/>`;
}
draw('axis', `<rect x="12" y="2071" width="680" height="75" fill="#f7f8fa"/>` + ticks +
  label(18, 2121, '20251013', 37, '#666') + label(235, 2121, '20251117', 37, '#666') + label(677, 2121, '20251229', 37, '#666', 'end'));
</script>
</body>
</html>
